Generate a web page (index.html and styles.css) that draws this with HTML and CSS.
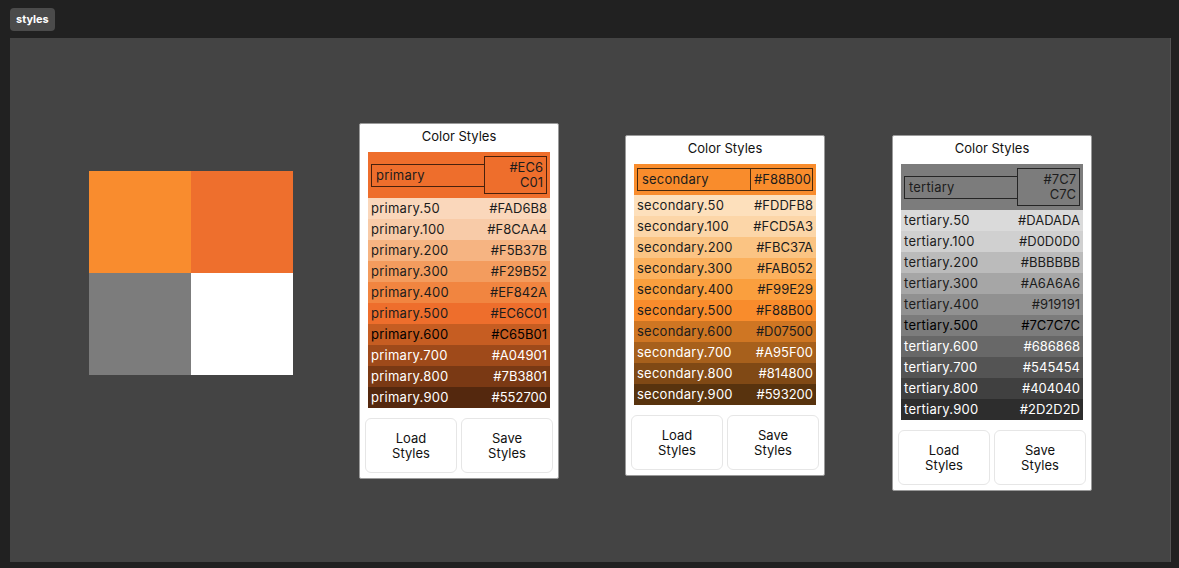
FILE: index.html
```html
<!DOCTYPE html>
<html lang="en">

<head>
    <meta charset="UTF-8">
    <title>styles</title>
    <link rel="stylesheet" href="styles.css">
</head>

<body>
    <div class="tab">styles</div>

    <div class="canvas">
        <div class="swatch">
            <div class="secondary-bg"></div>
            <div class="primary-bg"></div>
            <div class="tertiary-bg"></div>
            <div class="white-bg"></div>
        </div>

        <div class="node node-primary">
            <div class="title">Color Styles</div>
            <div class="palette">
                <div class="head" style="background:#EE6E2C">
                    <div class="name">primary</div>
                    <div class="value">#EC6<br>C01</div>
                </div>
                <div class="row" style="background:#FAD7BB"><span>primary.50</span><span>#FAD6B8</span></div>
                <div class="row" style="background:#F8CBA8"><span>primary.100</span><span>#F8CAA4</span></div>
                <div class="row" style="background:#F6B482"><span>primary.200</span><span>#F5B37B</span></div>
                <div class="row" style="background:#F39C5E"><span>primary.300</span><span>#F29B52</span></div>
                <div class="row" style="background:#F18540"><span>primary.400</span><span>#EF842A</span></div>
                <div class="row" style="background:#EE6E2C"><span>primary.500</span><span>#EC6C01</span></div>
                <div class="row dark-text" style="background:#C65D22"><span>primary.600</span><span>#C65B01</span></div>
                <div class="row light" style="background:#9F4A1A"><span>primary.700</span><span>#A04901</span></div>
                <div class="row light" style="background:#7A3914"><span>primary.800</span><span>#7B3801</span></div>
                <div class="row light" style="background:#54280E"><span>primary.900</span><span>#552700</span></div>
            </div>
            <div class="actions">
                <button class="btn">Load Styles</button>
                <button class="btn">Save Styles</button>
            </div>
        </div>

        <div class="node node-secondary">
            <div class="title">Color Styles</div>
            <div class="palette">
                <div class="head" style="background:#F98C2C">
                    <div class="name">secondary</div>
                    <div class="value">#F88B00</div>
                </div>
                <div class="row" style="background:#FDE0BC"><span>secondary.50</span><span>#FDDFB8</span></div>
                <div class="row" style="background:#FCD6A8"><span>secondary.100</span><span>#FCD5A3</span></div>
                <div class="row" style="background:#FBC483"><span>secondary.200</span><span>#FBC37A</span></div>
                <div class="row" style="background:#FBB15E"><span>secondary.300</span><span>#FAB052</span></div>
                <div class="row" style="background:#FA9F3E"><span>secondary.400</span><span>#F99E29</span></div>
                <div class="row" style="background:#F98C2C"><span>secondary.500</span><span>#F88B00</span></div>
                <div class="row" style="background:#CF7623"><span>secondary.600</span><span>#D07500</span></div>
                <div class="row light" style="background:#A7601C"><span>secondary.700</span><span>#A95F00</span></div>
                <div class="row light" style="background:#804915"><span>secondary.800</span><span>#814800</span></div>
                <div class="row light" style="background:#58330E"><span>secondary.900</span><span>#593200</span></div>
            </div>
            <div class="actions">
                <button class="btn">Load Styles</button>
                <button class="btn">Save Styles</button>
            </div>
        </div>

        <div class="node node-tertiary">
            <div class="title">Color Styles</div>
            <div class="palette">
                <div class="head" style="background:#7C7C7C">
                    <div class="name">tertiary</div>
                    <div class="value">#7C7<br>C7C</div>
                </div>
                <div class="row" style="background:#DADADA"><span>tertiary.50</span><span>#DADADA</span></div>
                <div class="row" style="background:#D0D0D0"><span>tertiary.100</span><span>#D0D0D0</span></div>
                <div class="row" style="background:#BBBBBB"><span>tertiary.200</span><span>#BBBBBB</span></div>
                <div class="row" style="background:#A6A6A6"><span>tertiary.300</span><span>#A6A6A6</span></div>
                <div class="row" style="background:#919191"><span>tertiary.400</span><span>#919191</span></div>
                <div class="row dark-text" style="background:#7C7C7C"><span>tertiary.500</span><span>#7C7C7C</span></div>
                <div class="row light" style="background:#686868"><span>tertiary.600</span><span>#686868</span></div>
                <div class="row light" style="background:#545454"><span>tertiary.700</span><span>#545454</span></div>
                <div class="row light" style="background:#404040"><span>tertiary.800</span><span>#404040</span></div>
                <div class="row light" style="background:#2D2D2D"><span>tertiary.900</span><span>#2D2D2D</span></div>
            </div>
            <div class="actions">
                <button class="btn">Load Styles</button>
                <button class="btn">Save Styles</button>
            </div>
        </div>
    </div>
</body>

</html>
```

FILE: styles.css
```css
html,
body {
    margin: 0;
    padding: 0;
    height: 100%;
    overflow: hidden;
}

body {
    background: #212121;
    font-family: 'Inter', 'Liberation Sans', sans-serif;
    display: flex;
    flex-direction: column;
    padding: 8px 8px 6px 10px;
    box-sizing: border-box;
    gap: 7px;
}

.tab {
    align-self: flex-start;
    background: #4b4b4b;
    color: #fff;
    font-size: 11px;
    font-weight: 700;
    padding: 5px 6px 6px;
    border-radius: 4px;
    line-height: 12px;
}

/* Canvas */

.canvas {
    flex: 1;
    position: relative;
    background: #444;
    border-right: 1px solid #555;
}

.swatch {
    position: absolute;
    left: 79px;
    top: 133px;
    width: 204px;
    height: 204px;
    display: grid;
    grid-template-columns: 1fr 1fr;
    grid-template-rows: 1fr 1fr;
}

.secondary-bg {
    background: #F98C2E;
}

.primary-bg {
    background: #EE6F2D;
}

.tertiary-bg {
    background: #7C7C7C;
}

.white-bg {
    background: #fff;
}

/* Nodes */

.node {
    position: absolute;
    width: 200px;
    box-sizing: border-box;
    background: #fff;
    border: 1px solid #9a9a9a;
    border-radius: 2px;
    padding: 0 5px 5px;
    display: flex;
    flex-direction: column;
}

.node-primary {
    left: 349px;
    top: 85px;
}

.node-secondary {
    left: 615px;
    top: 97px;
}

.node-tertiary {
    left: 882px;
    top: 97px;
}

.title {
    text-align: center;
    font-size: 13px;
    color: #111;
    line-height: 16px;
    padding: 4px 0 8px;
}

.palette {
    margin: 0 3px;
    font-size: 13px;
    color: #1c1c1c;
}

.head {
    display: flex;
    align-items: center;
    padding: 4px 3px;
}

.name {
    flex: 1;
    border: 1px solid rgba(0, 0, 0, 0.7);
    border-right: none;
    padding: 3px 4px;
    line-height: 15px;
    letter-spacing: 0.2px;
}

.value {
    width: 63px;
    box-sizing: border-box;
    border: 1px solid rgba(0, 0, 0, 0.7);
    padding: 3px 3px;
    text-align: right;
    line-height: 15px;
    white-space: nowrap;
}

.row {
    display: flex;
    justify-content: space-between;
    padding: 0 3px;
    line-height: 21px;
}

.row span:first-child {
    letter-spacing: 0.25px;
}

.row.dark-text {
    color: #000;
}

.row.light {
    color: #fff;
}

.actions {
    display: flex;
    gap: 4px;
    margin-top: 10px;
}

.btn {
    flex: 1;
    height: 55px;
    background: #fff;
    border: 1px solid #e6e6e6;
    border-radius: 6px;
    font-family: inherit;
    font-size: 13px;
    line-height: 15px;
    color: #111;
    padding: 0 20px;
}
```
